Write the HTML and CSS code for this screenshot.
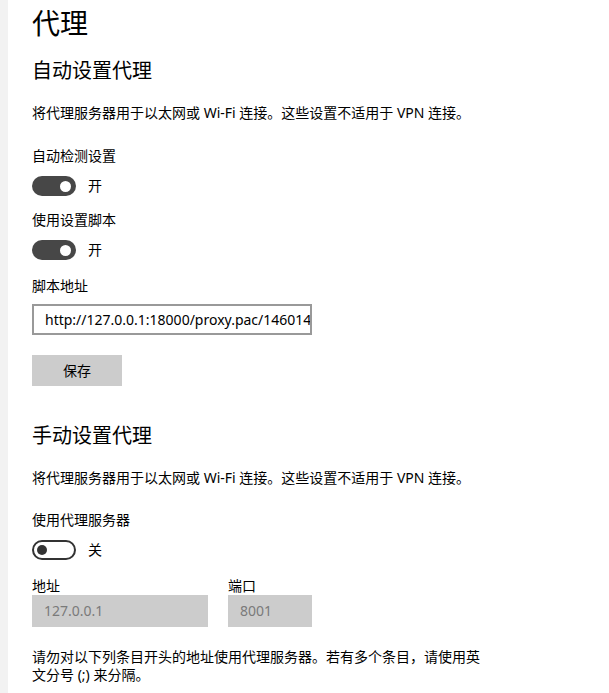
FILE: index.html
```html
<!DOCTYPE html>
<html lang="zh-CN">
<head>
<meta charset="utf-8">
<title>代理</title>
<link rel="stylesheet" href="styles.css">
</head>
<body>
<div class="page">
  <div class="strip"></div>
  <main class="content">
    <h1 class="title">代理</h1>
    <h2 class="section first">自动设置代理</h2>
    <p class="desc">将代理服务器用于以太网或 Wi-Fi 连接。这些设置不适用于 VPN 连接。</p>

    <div class="label l1">自动检测设置</div>
    <div class="toggle-row">
      <span class="toggle on"><span class="knob"></span></span>
      <span class="state">开</span>
    </div>

    <div class="label l2">使用设置脚本</div>
    <div class="toggle-row">
      <span class="toggle on"><span class="knob"></span></span>
      <span class="state">开</span>
    </div>

    <div class="label l3">脚本地址</div>
    <input class="url-input" type="text" value="http://127.0.0.1:18000/proxy.pac/1460147048">
    <div class="btn">保存</div>

    <h2 class="section second">手动设置代理</h2>
    <p class="desc">将代理服务器用于以太网或 Wi-Fi 连接。这些设置不适用于 VPN 连接。</p>

    <div class="label l4">使用代理服务器</div>
    <div class="toggle-row">
      <span class="toggle off"><span class="knob"></span></span>
      <span class="state">关</span>
    </div>

    <div class="fields">
      <div class="field">
        <div class="flabel">地址</div>
        <div class="dinput addr">127.0.0.1</div>
      </div>
      <div class="field">
        <div class="flabel">端口</div>
        <div class="dinput port">8001</div>
      </div>
    </div>

    <p class="note">请勿对以下列条目开头的地址使用代理服务器。若有多个条目，请使用英文分号 (;) 来分隔。</p>
  </main>
</div>
</body>
</html>
```

FILE: styles.css
```css
html, body {
  margin: 0;
  padding: 0;
  background: #ffffff;
}
body {
  font-family: "Noto Sans", "Noto Sans CJK SC", sans-serif;
  color: #000;
  font-size: 14px;
}
.page {
  display: flex;
  min-height: 693px;
}
.strip {
  width: 8px;
  background: #f2f2f2;
  flex: none;
}
.content {
  padding-left: 24px;
  padding-top: 4px;
  flex: 1;
}
.title {
  font-family: "Noto Sans CJK SC", sans-serif;
  font-size: 28px;
  font-weight: 400;
  line-height: 36px;
  margin: 0;
}
.section {
  font-family: "Noto Sans CJK SC", sans-serif;
  font-size: 20px;
  font-weight: 400;
  line-height: 28px;
  margin: 0;
}
.section.first { margin-top: 16px; }
.section.second { margin-top: 35px; }
.desc {
  margin: 19px 0 0;
  line-height: 20px;
}
.label {
  line-height: 20px;
}
.l1 { margin-top: 23px; }
.l2 { margin-top: 14px; }
.l3 { margin-top: 16px; }
.l4 { margin-top: 22px; }
.toggle-row {
  display: flex;
  align-items: center;
  gap: 12px;
  margin-top: 10px;
  height: 20px;
}
.toggle {
  width: 44px;
  height: 20px;
  border-radius: 10px;
  box-sizing: border-box;
  display: flex;
  align-items: center;
  flex: none;
}
.toggle.on {
  background: #474747;
  justify-content: flex-end;
  padding-right: 5px;
}
.toggle.on .knob {
  width: 11px;
  height: 11px;
  border-radius: 50%;
  background: #fff;
}
.toggle.off {
  border: 2px solid #333;
  padding-left: 3px;
}
.toggle.off .knob {
  width: 10px;
  height: 10px;
  border-radius: 50%;
  background: #333;
}
.state {
  line-height: 20px;
}
.url-input {
  display: block;
  margin: 8px 0 0;
  width: 280px;
  height: 31px;
  box-sizing: border-box;
  border: 2px solid #999;
  border-radius: 0;
  padding: 0 0 0 11px;
  font-family: "Noto Sans", "Noto Sans CJK SC", sans-serif;
  font-size: 14px;
  color: #000;
  background: #fff;
  outline: none;
}
.btn {
  margin-top: 20px;
  width: 90px;
  height: 31px;
  background: #cccccc;
  line-height: 31px;
  text-align: center;
}
.fields {
  display: flex;
  gap: 20px;
  margin-top: 17px;
}
.flabel {
  line-height: 18px;
}
.dinput {
  height: 32px;
  box-sizing: border-box;
  background: #cccccc;
  color: #7a7a7a;
  line-height: 32px;
  padding-left: 12px;
}
.addr { width: 176px; }
.port { width: 84px; }
.note {
  margin: 21px 0 0;
  line-height: 18px;
  max-width: 455px;
}
```
